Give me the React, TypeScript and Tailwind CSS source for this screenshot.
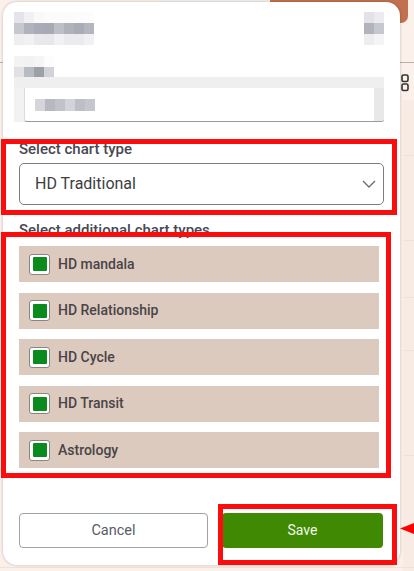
import React from "react";

const Mosaic = ({ rows, w, h }: { rows: string[][]; w: number; h: number }) => (
  <div className="flex flex-col">
    {rows.map((r, i) => (
      <div key={i} className="flex">
        {r.map((c, j) => (
          <div key={j} style={{ width: w, height: h, background: c }} />
        ))}
      </div>
    ))}
  </div>
);

const items = ["HD mandala", "HD Relationship", "HD Cycle", "HD Transit", "Astrology"];

export default function App() {
  return (
    <div
      className="relative w-[414px] h-[571px] overflow-hidden bg-[#fcf0ea] pt-[2px] pl-[3px]"
      style={{ fontFamily: "Roboto, 'Liberation Sans', sans-serif" }}
    >
      {/* background decorations */}
      <div className="absolute left-[157px] top-0 w-[108px] h-[4px] bg-[#f3f1f0]" />
      <div className="absolute left-[270px] top-0 w-[138px] h-[23px] bg-[#c1714f] rounded-br-[7px]" />
      <div className="absolute left-0 top-[62px] w-[414px] h-[1px] bg-[#b9b2ae]" />
      <div className="absolute left-[403px] top-[100px] w-[11px] h-[471px] bg-[#f8ebe4]" />
      <div className="absolute left-[403px] top-[155px] w-[11px] h-[1px] bg-[#efe0d8]" />
      <div className="absolute left-[403px] top-[240px] w-[11px] h-[1px] bg-[#efe0d8]" />
      <div className="absolute left-[403px] top-[297px] w-[11px] h-[1px] bg-[#efe0d8]" />
      <div className="absolute left-[403px] top-[350px] w-[11px] h-[1px] bg-[#efe0d8]" />
      <div className="absolute left-[403px] top-[455px] w-[11px] h-[1px] bg-[#efe0d8]" />
      <div className="absolute left-0 top-[567px] w-[414px] h-[1px] bg-[#eee2dc]" />
      <svg className="absolute left-[401px] top-[74px]" width="8" height="18" viewBox="0 0 8 18">
        <rect x="1" y="1" width="6" height="6.5" rx="1.5" fill="none" stroke="#333" strokeWidth="1.6" />
        <rect x="1" y="10" width="6" height="6.5" rx="1.5" fill="none" stroke="#333" strokeWidth="1.6" />
      </svg>

      {/* modal */}
      <div className="relative z-10 w-[397px] h-[563px] bg-white rounded-[14px] shadow-[0_0_3px_rgba(0,0,0,0.25)] flex flex-col pl-[11px] pr-[16px]">
        <div className="mt-[10px] flex justify-between">
          <Mosaic
            w={10}
            h={11}
            rows={[
              ["#e4e4ea", "#f1f1f3", "#f9f9fa", "#fbfbfb", "#fbfbfb", "#fbfbfb", "#fcfcfc", "#fcfcfc"],
              ["#c6c8cf", "#b0b2bc", "#a9abb6", "#a7a9b4", "#bdbfc7", "#afb1bb", "#a9abb5", "#b3b5bf"],
              ["#eeeef1", "#f1f1f3", "#e9e9ed", "#e8e8ec", "#f1f1f3", "#ebebef", "#ebebef", "#f1f1f3"],
            ]}
          />
          <Mosaic
            w={10}
            h={11}
            rows={[
              ["#e2e2e8", "#ececf0"],
              ["#b1b3bd", "#c6c8d0"],
              ["#ededf0", "#f4f4f6"],
            ]}
          />
        </div>
        <div className="mt-[11px]">
          <Mosaic
            w={10}
            h={10.5}
            rows={[
              ["#f3f3f4", "#f2f2f3", "#f5f5f6", "#fdfdfd"],
              ["#e1e1e5", "#b9bbc3", "#9d9fa9", "#d1d3d9"],
            ]}
          />
        </div>
        {/* input mosaic */}
        <div className="w-[370px] h-[45px] bg-[#efefef] flex flex-col">
          <div className="h-[11px]" />
          <div className="flex-1 flex">
            <div className="w-[10px] bg-[#f2f2f2]" />
            <div className="flex-1 bg-white border-b-[1.5px] border-l border-[#9a9a9a] border-l-[#dcdcdc] rounded-bl-[3px] flex items-center pl-[10px]">
              <Mosaic
                w={10}
                h={12}
                rows={[["#d5d5db", "#b7b9c1", "#c1c3c9", "#d3d3d9", "#bdbfc7", "#c5c7cd"]]}
              />
            </div>
            <div className="w-[10px] bg-[#e8e8e8] border-b-[1.5px] border-[#9a9a9a] rounded-br-[3px]" />
          </div>
        </div>

        <div className="pl-[5px] w-[370px]">
          <div className="mt-[17px] text-[15px] leading-[20px] font-medium text-[#484852]">Select chart type</div>
          <div className="mt-[4px] h-[42px] w-[365px] rounded-[5px] border border-[#7d7d80] flex items-center justify-between pl-[15px] pr-[7px]">
            <span className="text-[16px] text-[#3d3d42]">HD Traditional</span>
            <svg width="14" height="8" viewBox="0 0 14 8">
              <path d="M1 1 L7 7 L13 1" fill="none" stroke="#6b6b70" strokeWidth="1.3" />
            </svg>
          </div>
          <div className="mt-[15px] text-[15px] leading-[20px] font-medium text-[#484852]">
            Select additional chart types
          </div>
          <div className="mt-[6px] flex flex-col gap-[10.5px] w-[360px]">
            {items.map((t) => (
              <div key={t} className="h-[36px] bg-[#dccabe] flex items-center pl-[10px] gap-[8px]">
                <div className="w-[21px] h-[21px] bg-white border-[1.5px] border-[#8a8585] rounded-[3px] flex items-center justify-center">
                  <div className="w-[14px] h-[14px] bg-[#0b8a1e] rounded-[1px]" />
                </div>
                <span className="text-[14px] font-medium text-[#4a4448]">{t}</span>
              </div>
            ))}
          </div>
          <div className="mt-[45px] flex gap-[14px]">
            <button className="w-[189px] h-[35px] rounded-[4px] border border-[#9ea3a9] bg-white text-[14.5px] text-[#585d64]">
              Cancel
            </button>
            <button className="w-[161px] h-[35px] rounded-[4px] bg-[#3f8a02] text-[14px] text-[#f4f8ee]">
              Save
            </button>
          </div>
        </div>
      </div>

      {/* annotations */}
      <div className="absolute z-20 left-[1px] top-[139px] w-[396px] h-[76px] border-[5px] border-[#fb0d0d] pointer-events-none" />
      <div className="absolute z-20 left-[1px] top-[232px] w-[390px] h-[246px] border-[5px] border-[#fb0d0d] pointer-events-none" />
      <div className="absolute z-20 left-[218px] top-[504px] w-[179px] h-[61px] border-[5px] border-[#fb0d0d] pointer-events-none" />
      <svg className="absolute z-20 left-[399px] top-[521px]" width="15" height="15" viewBox="0 0 15 15">
        <polygon points="1,7.5 15,2 15,13" fill="#f00" />
      </svg>
    </div>
  );
}
